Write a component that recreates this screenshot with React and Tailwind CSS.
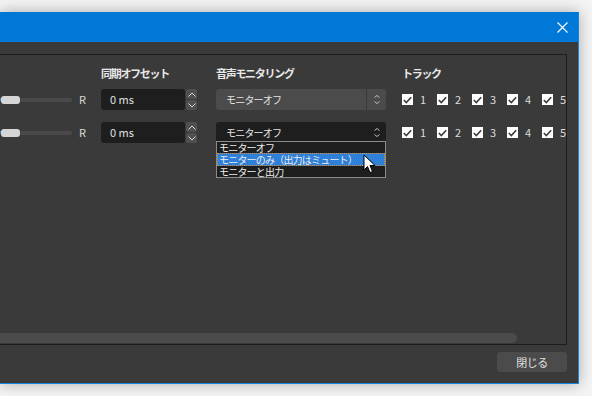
function Chevron({ up, className }) {
  return (
    <svg width="8" height="5" viewBox="0 0 8 5" className={className}>
      <polyline
        points={up ? "0.5,4.5 4,1 7.5,4.5" : "0.5,0.5 4,4 7.5,0.5"}
        fill="none"
        stroke="#d8d8d8"
        strokeWidth="1"
      />
    </svg>
  );
}

function Slider() {
  return (
    <div className="flex items-center h-[21px]">
      <div className="w-[1px] h-[3px] bg-[#2a82da]" />
      <div className="w-[19px] h-[8px] rounded-[3px] bg-[#d6d6d6]" />
      <div className="w-[52px] h-[4px] rounded-full bg-[#4a4a4a]" />
      <span className="ml-[7px] text-[11px] text-[#dcdcdc]">R</span>
    </div>
  );
}

function SpinBox() {
  return (
    <div className="flex h-[21px]">
      <div className="w-[84px] h-[21px] bg-[#1e1e1e] rounded-[3px] flex items-center pl-[9px] text-[11px] text-[#e0e0e0]">
        0 ms
      </div>
      <div className="ml-[1px] w-[11px] flex flex-col gap-[1px]">
        <div className="h-[10px] bg-[#505050] rounded-[2px] flex items-center justify-center">
          <Chevron up />
        </div>
        <div className="h-[10px] bg-[#505050] rounded-[2px] flex items-center justify-center">
          <Chevron />
        </div>
      </div>
    </div>
  );
}

function UpDown() {
  return (
    <div className="flex flex-col gap-[3px] items-center">
      <svg width="6" height="3" viewBox="0 0 6 3">
        <polyline points="0.5,2.5 3,0.5 5.5,2.5" fill="none" stroke="#bdbdbd" strokeWidth="1" />
      </svg>
      <svg width="6" height="3" viewBox="0 0 6 3">
        <polyline points="0.5,0.5 3,2.5 5.5,0.5" fill="none" stroke="#bdbdbd" strokeWidth="1" />
      </svg>
    </div>
  );
}

function MenuItem({ children, active }) {
  return (
    <div
      className={
        active
          ? "h-[13px] pl-[1px] bg-[#2f80d8] border border-dotted border-[#e08a2a] flex items-center leading-none"
          : "h-[11px] pl-[2px] flex items-center leading-none"
      }
    >
      {children}
    </div>
  );
}

function Select({ dark, open }) {
  return (
    <div className="relative w-[170px] h-[21px]">
      <div
        className={
          dark
            ? "h-full rounded-[3px] bg-[#1e1e1e] flex items-center"
            : "h-full rounded-[3px] bg-[#4b4b4b] flex items-center"
        }
      >
        <span className="flex-1 pl-[10px] text-[10px] tracking-[-0.8px] text-[#e4e4e4]">
          モニターオフ
        </span>
        {!dark && <div className="w-[1px] h-full bg-[#3a3a3a]" />}
        <div className="w-[19px] flex justify-center">
          <UpDown />
        </div>
      </div>
      {open && (
        <div className="absolute left-0 top-[19px] w-[170px] h-[37px] border border-[#8c8c8c] bg-[#1e1e1e] flex flex-col text-[10px] tracking-[-0.8px] text-[#ececec] z-10">
          <MenuItem>モニターオフ</MenuItem>
          <MenuItem active>モニターのみ（出力はミュート）</MenuItem>
          <MenuItem>モニターと出力</MenuItem>
          <svg
            width="13"
            height="21"
            viewBox="0 0 13 21"
            className="absolute left-[146px] top-[12px]"
          >
            <path
              d="M1 1 L1 16 L4.5 12.5 L7 18.5 L9.5 17.5 L7 11.5 L12 11.5 Z"
              fill="#ffffff"
              stroke="#000000"
              strokeWidth="1"
              strokeLinejoin="round"
            />
          </svg>
        </div>
      )}
    </div>
  );
}

function Checks() {
  return (
    <div className="flex items-center h-[21px]">
      {[1, 2, 3, 4, 5].map((n) => (
        <div key={n} className="w-[35px] flex items-center">
          <div className="w-[11px] h-[11px] bg-white flex items-center justify-center">
            <svg width="9" height="8" viewBox="0 0 9 8">
              <polyline points="0.8,4 3.3,6.5 8.2,1.2" fill="none" stroke="#3c3c3c" strokeWidth="1.6" />
            </svg>
          </div>
          <span className="ml-[7px] text-[11px] text-[#dcdcdc]">{n}</span>
        </div>
      ))}
    </div>
  );
}

function Row({ open }) {
  return (
    <div className="grid grid-cols-[101px_115px_186px_1fr] items-center h-[21px]">
      <Slider />
      <SpinBox />
      <Select dark={open} open={open} />
      <Checks />
    </div>
  );
}

export default function App() {
  return (
    <div
      className="w-[592px] h-[396px] bg-[#f4f4f4] overflow-hidden pt-[12px]"
      style={{ fontFamily: '"Noto Sans CJK JP", "Noto Sans", sans-serif' }}
    >
      <div className="w-[579px] h-[372px] flex flex-col bg-[#3a3a3a] border-r border-b border-[#1883d7] shadow-[0_0_14px_rgba(0,0,0,0.3)]">
        <div className="h-[30px] bg-[#0078d7] flex items-center justify-end pr-[10px]">
          <svg width="11" height="11" viewBox="0 0 11 11">
            <path d="M0.5 0.5 L10.5 10.5 M10.5 0.5 L0.5 10.5" stroke="#ffffff" strokeWidth="1.1" />
          </svg>
        </div>
        <div className="flex-1 flex flex-col pt-[12px] pr-[11px] pb-[11px]">
          <div className="h-[291px] border border-l-0 border-[#1e1e1e] flex flex-col">
            <div className="grid grid-cols-[101px_115px_186px_1fr] items-center h-[14px] mt-[10px] text-[11px] font-bold tracking-[-1.3px] text-[#e8e8e8]">
              <div />
              <div>同期オフセット</div>
              <div>音声モニタリング</div>
              <div>トラック</div>
            </div>
            <div className="mt-[10px]">
              <Row />
            </div>
            <div className="mt-[12px]">
              <Row open />
            </div>
            <div className="mt-auto mb-[1px] w-[517px] h-[10px] rounded-r-full bg-[#4b4b4b]" />
          </div>
          <div className="flex justify-end mt-[7px]">
            <button className="w-[70px] h-[20px] rounded-[3px] bg-[#4b4b4b] text-[11px] text-[#e0e0e0] tracking-[-0.5px]">
              閉じる
            </button>
          </div>
        </div>
      </div>
    </div>
  );
}
